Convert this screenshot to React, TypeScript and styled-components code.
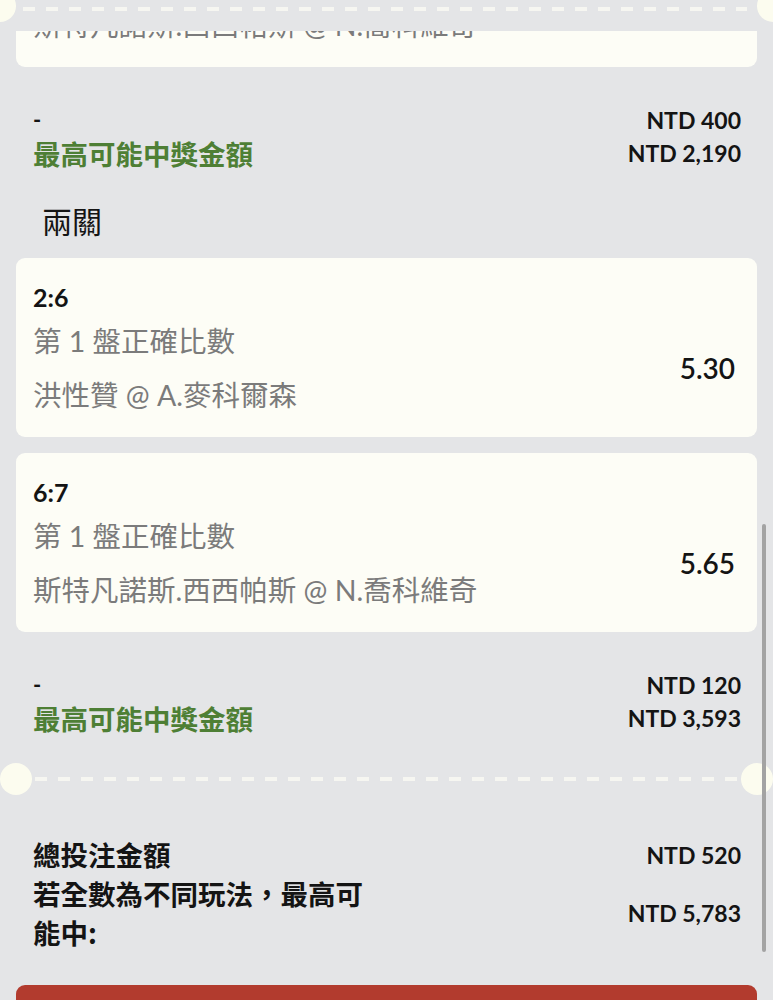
import React from "react";
import styled, { createGlobalStyle } from "styled-components";

const Global = createGlobalStyle`
  html, body { margin: 0; padding: 0; background: #e4e5e7; overflow: hidden; }
  body { font-family: Lato, "Noto Sans CJK TC", sans-serif; }
`;

const Page = styled.div`
  position: relative;
  width: 773px;
  height: 1000px;
  overflow: hidden;
  background: #e4e5e7;
  display: flex;
  flex-direction: column;
  padding-top: 7px;
  box-sizing: border-box;
`;

const Header = styled.div`
  position: absolute;
  left: 0;
  top: 0;
  width: 100%;
  height: 31px;
  background: #e4e5e7;
  overflow: hidden;
  z-index: 2;
`;

const Dashes = styled.div<{ $top: number; $left: number; $right: number }>`
  position: absolute;
  top: ${(p) => p.$top}px;
  left: ${(p) => p.$left}px;
  right: ${(p) => p.$right}px;
  height: 4px;
  background: repeating-linear-gradient(
    to right,
    #f6f6f1 0,
    #f6f6f1 12px,
    transparent 12px,
    transparent 23px
  );
`;

const Notch = styled.div<{ $x: number; $y: number }>`
  position: absolute;
  left: ${(p) => p.$x}px;
  top: ${(p) => p.$y}px;
  width: 32px;
  height: 32px;
  border-radius: 50%;
  background: #fcfcef;
`;

const Card = styled.div<{ $mt: number; $partial?: boolean }>`
  margin: ${(p) => p.$mt}px 16px 0;
  background: #fdfdf6;
  border-radius: 9px;
  padding: ${(p) => (p.$partial ? "0" : "24px")} 22px 24px 17px;
  display: flex;
  flex-direction: column;
`;

const Score = styled.div`
  font-family: Lato, "Noto Sans CJK TC", sans-serif;
  font-weight: 700;
  font-size: 25px;
  line-height: 30px;
  color: #141414;
`;

const BetRow = styled.div`
  display: flex;
  align-items: center;
  justify-content: space-between;
  margin-top: 11px;
`;

const BetInfo = styled.div`
  display: flex;
  flex-direction: column;
  gap: 18px;
`;

const Muted = styled.div`
  font-family: Lato, "Noto Sans CJK TC", sans-serif;
  font-size: 28.5px;
  line-height: 36px;
  color: #7b7b7b;
  white-space: nowrap;
`;

const Odds = styled.div`
  font-family: Lato, sans-serif;
  font-weight: 600;
  font-size: 28px;
  color: #141414;
`;

const Summary = styled.div<{ $mt: number }>`
  margin: ${(p) => p.$mt}px 32px 0 33px;
  display: grid;
  grid-template-columns: 1fr auto;
  grid-auto-rows: 33px;
  align-items: center;
`;

const Dash = styled.div`
  font-family: Lato, sans-serif;
  font-weight: 700;
  font-size: 22px;
  color: #141414;
`;

const Green = styled.div`
  font-family: "Noto Sans CJK TC", sans-serif;
  font-weight: 700;
  font-size: 27.5px;
  color: #4e7f35;
`;

const Amount = styled.div`
  font-family: Lato, sans-serif;
  font-weight: 700;
  font-size: 23px;
  color: #141414;
  text-align: right;
  white-space: nowrap;
`;

const SectionTitle = styled.div`
  margin: 31px 0 0 42px;
  font-family: "Noto Sans CJK TC", sans-serif;
  font-size: 30px;
  line-height: 40px;
  color: #141414;
`;

const Divider = styled.div`
  position: relative;
  margin-top: 29px;
  height: 32px;
  flex-shrink: 0;
`;

const Totals = styled.div`
  margin: 40px 32px 0 33px;
  display: flex;
  flex-direction: column;
`;

const TotalRow = styled.div`
  display: flex;
  justify-content: space-between;
  align-items: center;
`;

const TotalLabel = styled.div`
  font-family: "Noto Sans CJK TC", sans-serif;
  font-weight: 700;
  font-size: 27.5px;
  line-height: 39px;
  color: #141414;
  max-width: 345px;
`;

const SubmitBar = styled.div`
  margin: 33px 16px 0;
  height: 56px;
  flex-shrink: 0;
  border-radius: 9px;
  background: #b23b2e;
`;

const ScrollThumb = styled.div`
  position: absolute;
  left: 762px;
  top: 524px;
  width: 4px;
  height: 428px;
  border-radius: 2px;
  background: #a3a3a3;
  z-index: 3;
`;

type Bet = { score: string; market: string; selection: string; odds: string };

const bets: Bet[] = [
  { score: "2:6", market: "第 1 盤正確比數", selection: "洪性贊 @ A.麥科爾森", odds: "5.30" },
  { score: "6:7", market: "第 1 盤正確比數", selection: "斯特凡諾斯.西西帕斯 @ N.喬科維奇", odds: "5.65" },
];

function SummaryBlock({ mt, stake, max }: { mt: number; stake: string; max: string }) {
  return (
    <Summary $mt={mt}>
      <Dash>-</Dash>
      <Amount>{stake}</Amount>
      <Green>最高可能中獎金額</Green>
      <Amount>{max}</Amount>
    </Summary>
  );
}

export default function App() {
  return (
    <>
      <Global />
      <Page>
        <Header>
          <Notch $x={-16} $y={-10} />
          <Dashes $top={7} $left={23} $right={26} />
          <Notch $x={757} $y={-10} />
        </Header>

        <Card $mt={0} $partial>
          <Muted>斯特凡諾斯.西西帕斯 @ N.喬科維奇</Muted>
        </Card>

        <SummaryBlock mt={36} stake="NTD 400" max="NTD 2,190" />

        <SectionTitle>兩關</SectionTitle>

        {bets.map((b, i) => (
          <Card key={b.score} $mt={i === 0 ? 18 : 16}>
            <Score>{b.score}</Score>
            <BetRow>
              <BetInfo>
                <Muted>{b.market}</Muted>
                <Muted>{b.selection}</Muted>
              </BetInfo>
              <Odds>{b.odds}</Odds>
            </BetRow>
          </Card>
        ))}

        <SummaryBlock mt={36} stake="NTD 120" max="NTD 3,593" />

        <Divider>
          <Notch $x={0} $y={0} />
          <Dashes $top={14} $left={35} $right={35} />
          <Notch $x={741} $y={0} />
        </Divider>

        <Totals>
          <TotalRow>
            <TotalLabel>總投注金額</TotalLabel>
            <Amount>NTD 520</Amount>
          </TotalRow>
          <TotalRow>
            <TotalLabel>若全數為不同玩法，最高可能中:</TotalLabel>
            <Amount>NTD 5,783</Amount>
          </TotalRow>
        </Totals>

        <SubmitBar />
        <ScrollThumb />
      </Page>
    </>
  );
}
